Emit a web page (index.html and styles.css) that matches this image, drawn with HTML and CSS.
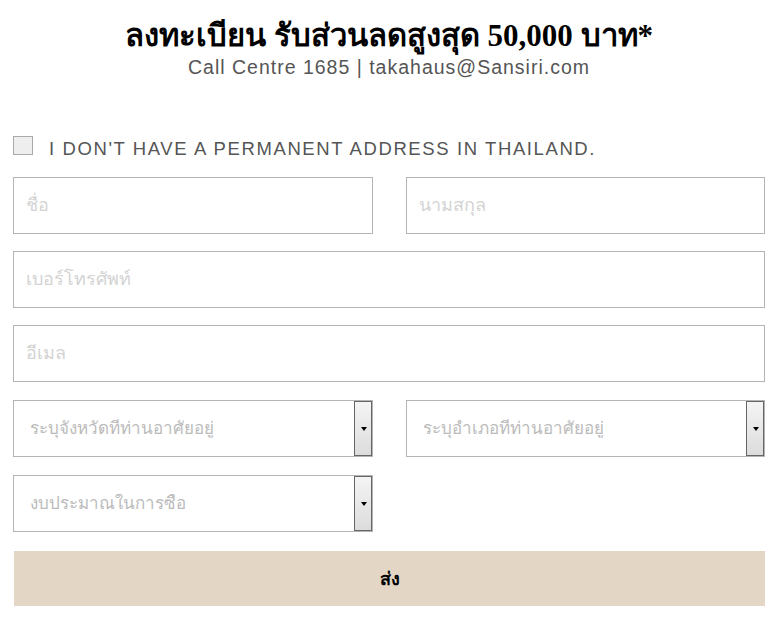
FILE: index.html
```html
<!DOCTYPE html>
<html lang="th">

<head>
  <meta charset="UTF-8" />
  <meta name="viewport" content="width=device-width, initial-scale=1" />
  <title>ลงทะเบียน</title>
  <link rel="stylesheet" href="styles.css">
</head>

<body>
  <main class="register">
    <header class="register-head">
      <h1>ลงทะเบียน รับส่วนลดสูงสุด 50,000 บาท*</h1>
      <p>Call Centre 1685 | takahaus@Sansiri.com</p>
    </header>

    <form class="register-form" onsubmit="return false;">
      <label class="check-row">
        <input type="checkbox" class="check-box" />
        <span>I don't have a permanent address in Thailand.</span>
      </label>

      <div class="row two">
        <input class="field" type="text" placeholder="ชื่อ" />
        <input class="field" type="text" placeholder="นามสกุล" />
      </div>

      <div class="row">
        <input class="field" type="tel" placeholder="เบอร์โทรศัพท์" />
      </div>

      <div class="row wide-gap">
        <input class="field" type="email" placeholder="อีเมล" />
      </div>

      <div class="row two wide-gap">
        <div class="select-wrap">
          <select class="field select">
            <option>ระบุจังหวัดที่ท่านอาศัยอยู่</option>
          </select>
        </div>
        <div class="select-wrap">
          <select class="field select">
            <option>ระบุอำเภอที่ท่านอาศัยอยู่</option>
          </select>
        </div>
      </div>

      <div class="row two last">
        <div class="select-wrap">
          <select class="field select">
            <option>งบประมาณในการซื้อ</option>
          </select>
        </div>
      </div>

      <button type="submit" class="send-button">ส่ง</button>
    </form>
  </main>
</body>

</html>
```

FILE: styles.css
```css
* {
  box-sizing: border-box;
}

body {
  margin: 0;
  font-family: "Liberation Sans", Arial, sans-serif;
  background-color: #fff;
  color: #333;
}

.register {
  margin: 0 16px 0 13px;
}

.register-head {
  text-align: center;
  padding-top: 17px;
}

.register-head h1 {
  margin: 0;
  font-family: "Liberation Serif", "Times New Roman", serif;
  font-size: 31px;
  line-height: 38px;
  font-weight: 700;
  color: #000;
}

.register-head p {
  margin: 1px 0 0;
  font-size: 19.5px;
  line-height: 22px;
  letter-spacing: 1px;
  color: #555;
}

.register-form {
  margin-top: 58px;
}

.check-row {
  display: flex;
  align-items: flex-start;
  gap: 16px;
  margin-bottom: 18px;
  font-size: 18.5px;
  line-height: 20px;
  letter-spacing: 1.6px;
  color: #555;
  text-transform: uppercase;
}

.check-row span {
  padding-top: 3px;
}

.check-box {
  appearance: none;
  flex: none;
  margin: 0;
  width: 20px;
  height: 19px;
  background-color: #eee;
  border: 1px solid #aaa;
}

.row {
  display: grid;
  grid-template-columns: 1fr;
  gap: 33px;
  margin-bottom: 17px;
}

.row.two {
  grid-template-columns: 1fr 1fr;
}

.row.wide-gap {
  margin-bottom: 18px;
}

.row.last {
  margin-bottom: 19px;
}

.field {
  display: block;
  width: 100%;
  height: 57px;
  margin: 0;
  padding: 0 12px;
  border: 1px solid #b4b4b4;
  border-radius: 0;
  background-color: #fff;
  font-family: "Liberation Sans", Arial, sans-serif;
  font-size: 18px;
  color: #333;
  outline: none;
}

.field::placeholder {
  color: #d3d3d3;
}

.select-wrap {
  position: relative;
}

.select {
  appearance: none;
  padding: 0 30px 0 16px;
  font-family: "Liberation Serif", "Times New Roman", serif;
  font-size: 17px;
  color: #bbb;
}

/* ปุ่มลูกศรแบบเก่า */
.select-wrap::after {
  content: "";
  position: absolute;
  top: 1px;
  right: 1px;
  bottom: 1px;
  width: 16px;
  border: 1px solid #666;
  background: linear-gradient(#f4f4f4, #dcdcdc);
  pointer-events: none;
}

.select-wrap::before {
  content: "";
  position: absolute;
  right: 6px;
  top: 27px;
  z-index: 1;
  border-left: 3px solid transparent;
  border-right: 3px solid transparent;
  border-top: 4px solid #000;
  pointer-events: none;
}

.send-button {
  display: block;
  width: calc(100% - 1px);
  margin: 0 0 0 1px;
  height: 55px;
  border: none;
  background-color: #e3d6c5;
  font-family: "Liberation Sans", Arial, sans-serif;
  font-size: 18px;
  font-weight: 700;
  color: #000;
  cursor: pointer;
}
```
